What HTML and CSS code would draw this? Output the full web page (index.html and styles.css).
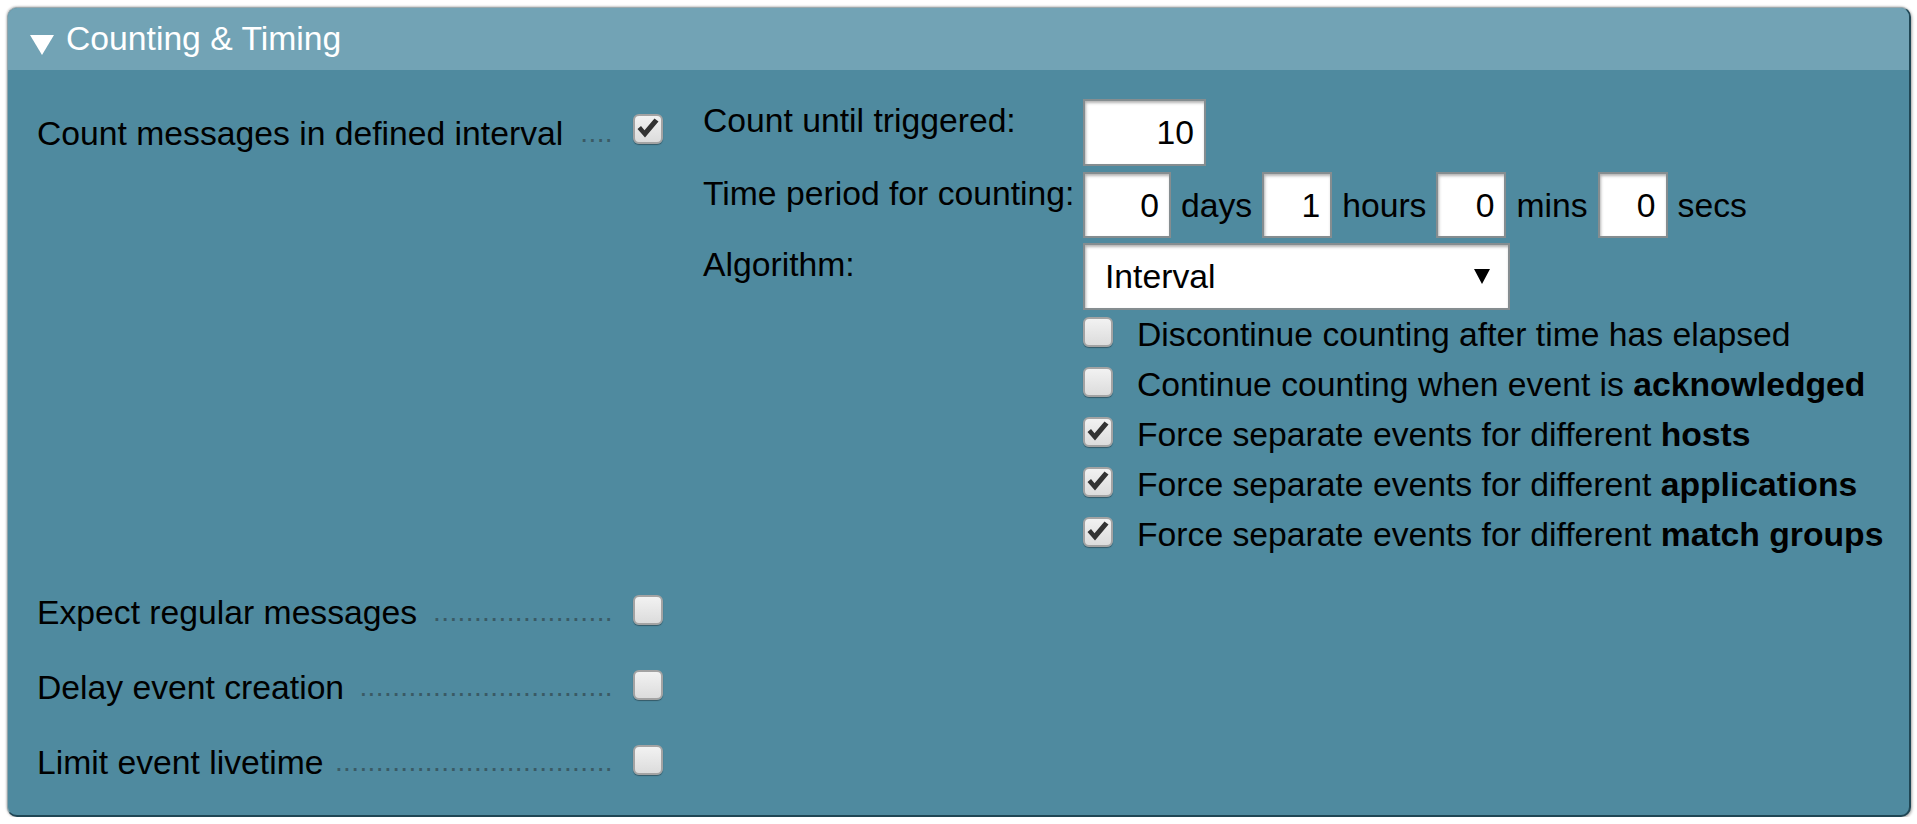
FILE: index.html
```html
<!DOCTYPE html>
<html>
<head>
<meta charset="utf-8">
<link rel="stylesheet" href="styles.css">
</head>
<body>
<div class="panel">
  <div class="header"><span class="tri"></span><span class="title">Counting &amp; Timing</span></div>
  <div class="body">
    <div class="row first">
      <div class="legend"><span class="lbl">Count messages in defined interval</span><span class="dots">....</span><span class="cb"><svg viewBox="0 0 26 26" width="26" height="26"><path d="M2.5 13 L6 10 L9.5 14.2 L19.5 2.5 L23.5 5.5 L10 21.5 Z" fill="#333"/></svg></span></div>
      <div class="content">
        <div class="frow r1">
          <div class="flabel">Count until triggered:</div>
          <div class="ctl"><div class="inp wide">10</div></div>
        </div>
        <div class="frow r2">
          <div class="flabel">Time period for counting:</div>
          <div class="ctl">
            <div class="inp days">0</div><span class="unit">days</span>
            <div class="inp small">1</div><span class="unit">hours</span>
            <div class="inp small">0</div><span class="unit">mins</span>
            <div class="inp small">0</div><span class="unit">secs</span>
          </div>
        </div>
        <div class="frow r3">
          <div class="flabel">Algorithm:</div>
          <div class="ctl"><div class="select"><span class="seltext">Interval</span><span class="arrow"></span></div></div>
        </div>
        <div class="opts">
          <div class="opt"><span class="cb"></span><span class="otext">Discontinue counting after time has elapsed</span></div>
          <div class="opt"><span class="cb"></span><span class="otext">Continue counting when event is <b>acknowledged</b></span></div>
          <div class="opt"><span class="cb"><svg viewBox="0 0 26 26" width="26" height="26"><path d="M2.5 13 L6 10 L9.5 14.2 L19.5 2.5 L23.5 5.5 L10 21.5 Z" fill="#333"/></svg></span><span class="otext">Force separate events for different <b>hosts</b></span></div>
          <div class="opt"><span class="cb"><svg viewBox="0 0 26 26" width="26" height="26"><path d="M2.5 13 L6 10 L9.5 14.2 L19.5 2.5 L23.5 5.5 L10 21.5 Z" fill="#333"/></svg></span><span class="otext">Force separate events for different <b>applications</b></span></div>
          <div class="opt"><span class="cb"><svg viewBox="0 0 26 26" width="26" height="26"><path d="M2.5 13 L6 10 L9.5 14.2 L19.5 2.5 L23.5 5.5 L10 21.5 Z" fill="#333"/></svg></span><span class="otext">Force separate events for different <b>match groups</b></span></div>
        </div>
      </div>
    </div>
    <div class="row">
      <div class="legend"><span class="lbl">Expect regular messages</span><span class="dots">......................</span><span class="cb"></span></div>
    </div>
    <div class="row">
      <div class="legend"><span class="lbl">Delay event creation</span><span class="dots">...............................</span><span class="cb"></span></div>
    </div>
    <div class="row">
      <div class="legend"><span class="lbl">Limit event livetime</span><span class="dots">..................................</span><span class="cb"></span></div>
    </div>
  </div>
</div>
</body>
</html>
```

FILE: styles.css
```css
html, body {
  margin: 0;
  padding: 0;
  background: #ffffff;
}
body {
  font-family: "Liberation Sans", Arial, sans-serif;
  font-size: 33.7px;
  color: #000;
}
.panel {
  margin: 7px 0 0 7px;
  width: 1904px;
  box-sizing: border-box;
  border-top: 1px solid #9aa9ae;
  border-left: 1px solid #8fa3aa;
  border-right: 2px solid #1f4654;
  border-bottom: 2px solid #1f4654;
  border-radius: 10px;
  overflow: hidden;
  background: #4f8a9f;
  box-shadow: 1px 1px 3px rgba(0, 0, 0, 0.35), -1px -1px 2px rgba(0, 0, 0, 0.15);
}
.header {
  height: 62px;
  background: #72a3b5;
  display: flex;
  align-items: center;
  padding-left: 22px;
  color: #fff;
}
.tri {
  width: 0;
  height: 0;
  border-left: 12.5px solid transparent;
  border-right: 12.5px solid transparent;
  border-top: 20px solid #fff;
  margin-top: 12px;
  margin-right: 12px;
}
.title {
  line-height: 60px;
  padding-bottom: 2px;
}
.body {
  padding: 29px 0 10px 29px;
}
.row {
  display: flex;
  align-items: flex-start;
  padding-bottom: 27px;
}
.row.first {
  padding-bottom: 33px;
}
.legend {
  width: 626px;
  height: 36px;
  padding-top: 12px;
  display: flex;
  align-items: center;
  flex-shrink: 0;
}
.lbl {
  white-space: nowrap;
  line-height: 36px;
  padding-top: 3px;
}
.first .lbl {
  padding-top: 7px;
}
.dots {
  margin-left: auto;
  white-space: nowrap;
  font-size: 28px;
  letter-spacing: 0.4px;
  color: #3a5a65;
  line-height: 36px;
  padding-top: 3px;
  margin-right: 20px;
}
.first .dots {
  padding-top: 7px;
}
.cb {
  width: 30px;
  height: 30px;
  box-sizing: border-box;
  border: 2px solid #a3a3a3;
  border-radius: 6px;
  background: linear-gradient(#f2f2f2, #dcdcdc);
  box-shadow: 0 1px 1px rgba(0, 0, 0, 0.35);
  flex-shrink: 0;
  display: block;
}
.cb svg {
  display: block;
}
.content {
  margin-left: 40px;
}
.frow {
  display: flex;
  align-items: flex-start;
}
.frow.r1 { margin-bottom: 6px; }
.frow.r2 { margin-bottom: 5px; }
.frow.r3 { margin-bottom: 7px; }
.flabel {
  width: 380px;
  flex-shrink: 0;
  line-height: 38px;
  padding-top: 2px;
  white-space: nowrap;
}
.ctl {
  display: flex;
  align-items: center;
}
.inp {
  height: 67px;
  box-sizing: border-box;
  background: #fff;
  border: 2px solid #858d90;
  box-shadow: inset 1px 2px 3px rgba(0, 0, 0, 0.3);
  text-align: right;
  padding-right: 10px;
  line-height: 63px;
}
.r2 .inp { height: 66px; line-height: 62px; }
.inp.wide { width: 123px; }
.inp.days { width: 88px; }
.inp.small { width: 70px; }
.unit {
  margin: 0 10px 0 10px;
}
.select {
  width: 427px;
  height: 67px;
  box-sizing: border-box;
  background: #fff;
  border: 2px solid #858d90;
  box-shadow: inset 1px 2px 3px rgba(0, 0, 0, 0.3);
  display: flex;
  align-items: center;
  justify-content: space-between;
  padding: 0 18px 0 20px;
}
.arrow {
  width: 0;
  height: 0;
  border-left: 8px solid transparent;
  border-right: 8px solid transparent;
  border-top: 15px solid #000;
}
.opts {
  margin-left: 380px;
}
.opt {
  display: flex;
  align-items: center;
  height: 30px;
  margin-bottom: 20px;
}
.opt:last-child {
  margin-bottom: 0;
}
.otext {
  margin-left: 24px;
  white-space: nowrap;
  line-height: 36px;
  padding-top: 4px;
}
.otext b {
  font-weight: bold;
}
```
